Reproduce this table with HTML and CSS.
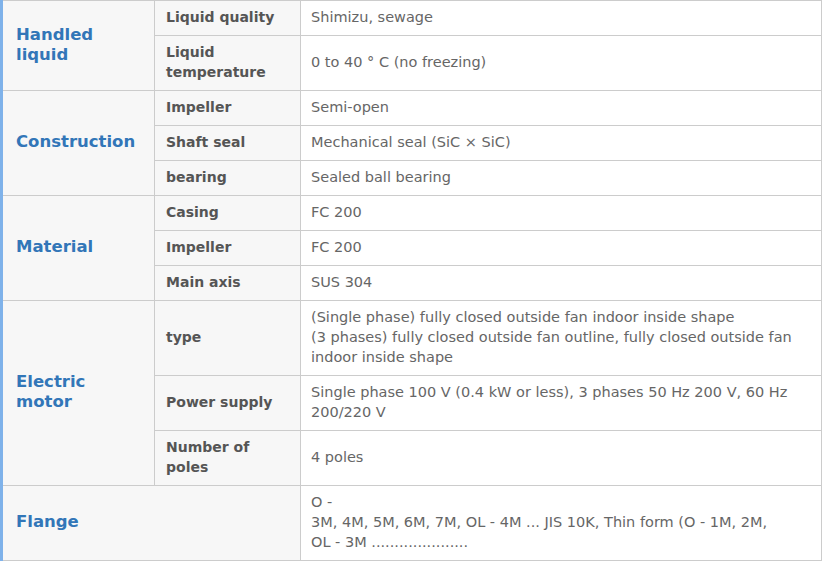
FILE: index.html
```html
<!DOCTYPE html>
<html lang="en">
<head>
<meta charset="utf-8">
<title>Specifications</title>
<link rel="stylesheet" href="styles.css">
</head>
<body>
<table class="spec">
  <colgroup>
    <col class="c-group">
    <col class="c-label">
    <col class="c-value">
  </colgroup>
  <tbody>
    <tr>
      <th class="group" rowspan="2">Handled<br>liquid</th>
      <th class="label">Liquid quality</th>
      <td class="value">Shimizu, sewage</td>
    </tr>
    <tr>
      <th class="label">Liquid<br>temperature</th>
      <td class="value">0 to 40 ° C (no freezing)</td>
    </tr>
    <tr>
      <th class="group" rowspan="3">Construction</th>
      <th class="label">Impeller</th>
      <td class="value">Semi-open</td>
    </tr>
    <tr>
      <th class="label">Shaft seal</th>
      <td class="value">Mechanical seal (SiC × SiC)</td>
    </tr>
    <tr>
      <th class="label">bearing</th>
      <td class="value">Sealed ball bearing</td>
    </tr>
    <tr>
      <th class="group" rowspan="3">Material</th>
      <th class="label">Casing</th>
      <td class="value">FC 200</td>
    </tr>
    <tr>
      <th class="label">Impeller</th>
      <td class="value">FC 200</td>
    </tr>
    <tr>
      <th class="label">Main axis</th>
      <td class="value">SUS 304</td>
    </tr>
    <tr>
      <th class="group" rowspan="3">Electric<br>motor</th>
      <th class="label">type</th>
      <td class="value">(Single phase) fully closed outside fan indoor inside shape<br>(3 phases) fully closed outside fan outline, fully closed outside fan indoor inside shape</td>
    </tr>
    <tr>
      <th class="label">Power supply</th>
      <td class="value">Single phase 100 V (0.4 kW or less), 3 phases 50 Hz 200 V, 60 Hz 200/220 V</td>
    </tr>
    <tr>
      <th class="label">Number of<br>poles</th>
      <td class="value">4 poles</td>
    </tr>
    <tr>
      <th class="group" colspan="2">Flange</th>
      <td class="value">O -<br>3M, 4M, 5M, 6M, 7M, OL - 4M ... JIS 10K, Thin form (O - 1M, 2M,<br>OL - 3M .....................</td>
    </tr>
  </tbody>
</table>
</body>
</html>
```

FILE: styles.css
```css
html, body {
  margin: 0;
  padding: 0;
  background: #ffffff;
}

body {
  font-family: "DejaVu Sans", Verdana, sans-serif;
  width: 822px;
}

.spec {
  width: 822px;
  border-collapse: collapse;
  table-layout: fixed;
  border-left: 3px solid #7fb2ea;
}

.c-group { width: 153px; }
.c-label { width: 146px; }
.c-value { width: auto; }

.spec th,
.spec td {
  border: 1px solid #cccccc;
  vertical-align: middle;
  text-align: left;
  padding: 6px 10px 8px 11px;
  line-height: 20px;
}

.spec .group {
  background: #f7f7f7;
  color: #3276b8;
  font-size: 16.5px;
  font-weight: bold;
  padding-left: 13px;
}

.spec .label {
  background: #f7f7f7;
  color: #555555;
  font-size: 14px;
  font-weight: bold;
}

.spec .value {
  background: #ffffff;
  color: #666666;
  font-size: 14.5px;
  font-weight: normal;
  padding-left: 10px;
}
```
